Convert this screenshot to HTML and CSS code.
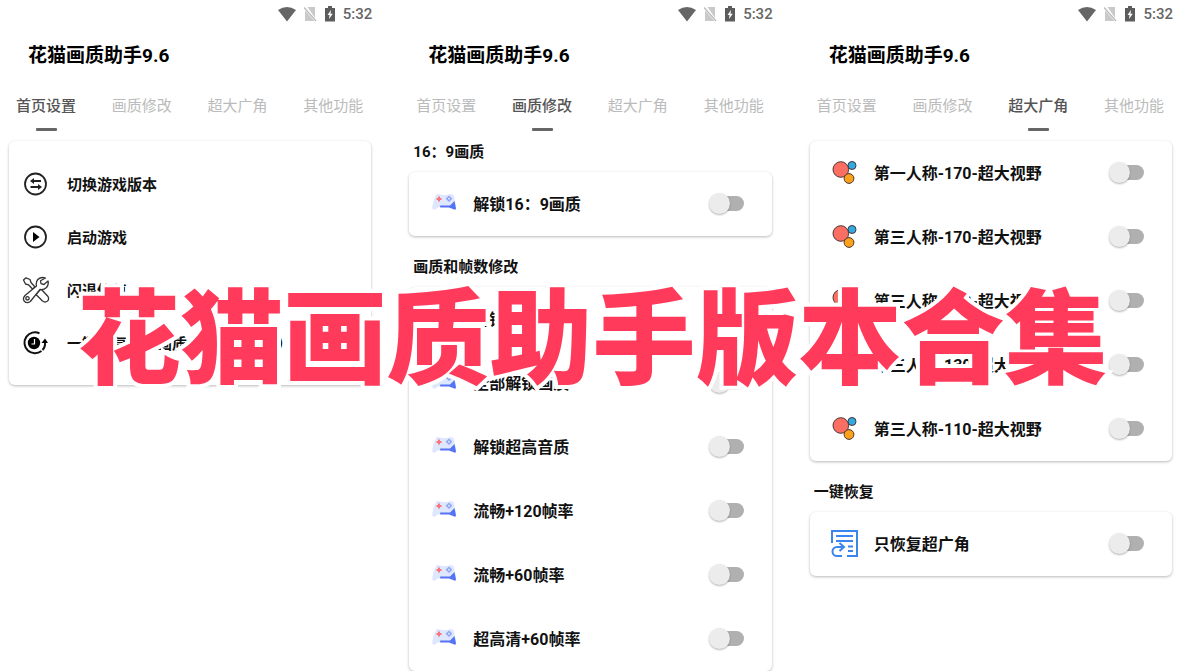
FILE: index.html
```html
<!DOCTYPE html>
<html lang="zh-CN">
<head>
  <meta charset="UTF-8">
  <title>花猫画质助手版本合集</title>
  <link rel="stylesheet" href="styles.css">
</head>
<body>
  <!-- Shared icons -->
  <svg class="sprite" aria-hidden="true">
    <symbol id="wifi" viewBox="0 0 20 16"><path d="M1 4Q10-2 19 4L10 15.500z" fill="#666"/></symbol>
    <symbol id="nosim" viewBox="0 0 14 16"><path d="M4.500 1H12v11zM2 4.500 11.500 15H2z" fill="#c9c9c9"/><path d="M1 1.500 13 15" stroke="#bbb" stroke-width="1.300"/></symbol>
    <symbol id="battery" viewBox="0 0 12 16"><path d="M4 0h4v2h3v13.500H1V2h3z" fill="#5c5c5c"/><path d="M7 4 3.500 9h2L5 13l3.800-5.300H6.500z" fill="#fff"/></symbol>
    <symbol id="gamepad" viewBox="0 0 28 28">
      <path d="M6 6Q7 4.500 9 5L12 6h5l3-1q3-.5 4 2l2 11q0 3-2.500 2L19 18H9l-4 2.500Q2 21.500 2.200 18 3 12 6 6z" fill="#dfe7ff"/>
      <path d="M24.500 12 26 19.500q0 2-3 .5L19 18.500H10.500q-1.500-1 0-2H20z" fill="#5573f5"/>
      <path d="M9 7.500v5M6.500 10h5" stroke="#f5777b" stroke-width="2"/>
      <path d="m19 6.500 3.300 3.300L19 13l-3.300-3.200z" fill="#8da5f3"/><path d="m19 8.500 1.200 1.300L19 11l-1.200-1.200z" fill="#dfe7ff"/>
    </symbol>
    <symbol id="balls" viewBox="0 0 28 28">
      <g stroke="#4b3436" stroke-width="1"><circle cx="9.800" cy="11.500" r="7.800" fill="#fb6f62"/><circle cx="21" cy="7.500" r="4" fill="#2eabe2"/><circle cx="18" cy="20.500" r="4.900" fill="#f9a11b"/></g>
    </symbol>
  </svg>

  <main class="screens">
    <section class="screen">
      <div class="status">
        <svg width="20" height="16"><use href="#wifi"/></svg>
        <svg width="14" height="16"><use href="#nosim"/></svg>
        <svg width="12" height="16"><use href="#battery"/></svg>
        <span>5:32</span>
      </div>
      <h2 class="title">花猫画质助手9.6</h2>
      <nav class="tabs">
        <a href="#" class="active">首页设置</a>
        <a href="#">画质修改</a>
        <a href="#">超大广角</a>
        <a href="#">其他功能</a>
      </nav>
      <div class="card menu">
        <button type="button" class="row">
          <svg class="icon" viewBox="0 0 28 28" fill="none" stroke="#222" stroke-width="1.800"><circle cx="13.500" cy="14" r="10.500"/><path d="M19 11H10M8.500 17H18"/><path d="M8 11l4-3v6zM20 17l-4-3v6z" fill="#222" stroke="none"/></svg>
          <span>切换游戏版本</span>
        </button>
        <button type="button" class="row">
          <svg class="icon" viewBox="0 0 28 28"><circle cx="13.500" cy="14" r="10.500" fill="none" stroke="#222" stroke-width="1.800"/><path d="M11 9v10l6.500-5z"/></svg>
          <span>启动游戏</span>
        </button>
        <button type="button" class="row">
          <svg class="icon" viewBox="0 0 28 28" fill="none" stroke="#333" stroke-width="1.300" stroke-linejoin="round"><path d="M1.500 4 4 1.800 8 3.500 9 6.500 13 11 10.500 13 6.500 8.800 3.500 8z"/><path d="M16 16l3-3 7 7.500q1.500 3-.8 4.800-2.200 1.500-4.700-.3L14 18.500z"/><path d="M23.500 2Q19 .5 15.800 3.500 13.500 6.500 14.500 10L3 19.500Q.3 22.500 2.300 25.200 5 27.800 8.300 25.500L18 13.500q4 .5 6.500-2Q27 8.500 26 5l-4 3.500-3-.8-.5-3z" fill="#fff"/><circle cx="5.500" cy="22.300" r="1.700"/></svg>
          <span>闪退修复</span>
        </button>
        <button type="button" class="row">
          <svg class="icon" viewBox="0 0 28 28"><path d="M17.500 4.300A10.500 10.500 0 1 0 19.500 22M23 13Q23.500 18 20.500 21" fill="none" stroke="#111" stroke-width="2"/><path d="M19.500 14 23 9.500 26 14z"/><circle cx="12" cy="14" r="6.200"/><path d="M12.500 10V15h-3" fill="none" stroke="#fff" stroke-width="1.200"/></svg>
          <span>一键恢复默认画质（包括超广角）</span>
        </button>
      </div>
    </section>

    <section class="screen">
      <div class="status">
        <svg width="20" height="16"><use href="#wifi"/></svg>
        <svg width="14" height="16"><use href="#nosim"/></svg>
        <svg width="12" height="16"><use href="#battery"/></svg>
        <span>5:32</span>
      </div>
      <h2 class="title">花猫画质助手9.6</h2>
      <nav class="tabs">
        <a href="#">首页设置</a>
        <a href="#" class="active">画质修改</a>
        <a href="#">超大广角</a>
        <a href="#">其他功能</a>
      </nav>
      <h3 class="group">16：9画质</h3>
      <div class="card">
        <label class="row"><svg class="icon"><use href="#gamepad"/></svg><span>解锁16：9画质</span><input type="checkbox" class="switch"></label>
      </div>
      <h3 class="group">画质和帧数修改</h3>
      <div class="card">
        <label class="row"><svg class="icon"><use href="#gamepad"/></svg><span>解锁画质</span><input type="checkbox" class="switch"></label>
        <label class="row"><svg class="icon"><use href="#gamepad"/></svg><span>全部解锁画质</span><input type="checkbox" class="switch"></label>
        <label class="row"><svg class="icon"><use href="#gamepad"/></svg><span>解锁超高音质</span><input type="checkbox" class="switch"></label>
        <label class="row"><svg class="icon"><use href="#gamepad"/></svg><span>流畅+120帧率</span><input type="checkbox" class="switch"></label>
        <label class="row"><svg class="icon"><use href="#gamepad"/></svg><span>流畅+60帧率</span><input type="checkbox" class="switch"></label>
        <label class="row"><svg class="icon"><use href="#gamepad"/></svg><span>超高清+60帧率</span><input type="checkbox" class="switch"></label>
      </div>
    </section>

    <section class="screen">
      <div class="status">
        <svg width="20" height="16"><use href="#wifi"/></svg>
        <svg width="14" height="16"><use href="#nosim"/></svg>
        <svg width="12" height="16"><use href="#battery"/></svg>
        <span>5:32</span>
      </div>
      <h2 class="title">花猫画质助手9.6</h2>
      <nav class="tabs">
        <a href="#">首页设置</a>
        <a href="#">画质修改</a>
        <a href="#" class="active">超大广角</a>
        <a href="#">其他功能</a>
      </nav>
      <div class="card">
        <label class="row"><svg class="icon"><use href="#balls"/></svg><span>第一人称-170-超大视野</span><input type="checkbox" class="switch"></label>
        <label class="row"><svg class="icon"><use href="#balls"/></svg><span>第三人称-170-超大视野</span><input type="checkbox" class="switch"></label>
        <label class="row"><svg class="icon"><use href="#balls"/></svg><span>第三人称-150-超大视野</span><input type="checkbox" class="switch"></label>
        <label class="row"><svg class="icon"><use href="#balls"/></svg><span>第三人称-130-超大视野</span><input type="checkbox" class="switch"></label>
        <label class="row"><svg class="icon"><use href="#balls"/></svg><span>第三人称-110-超大视野</span><input type="checkbox" class="switch"></label>
      </div>
      <h3 class="group">一键恢复</h3>
      <div class="card">
        <label class="row">
          <svg class="icon" viewBox="0 0 28 28" fill="none" stroke="#3b86ee" stroke-width="2"><path d="M1 14V2h25v25H16M5 7h17M5 12h17M17 17.500h5M17 22h5"/><path d="M11 27H6a4.500 4.500 0 0 1 0-9h6"/><path d="M8.500 14 13 18l-4.500 4"/></svg>
          <span>只恢复超广角</span><input type="checkbox" class="switch">
        </label>
      </div>
    </section>
  </main>

  <h1 class="banner">花猫画质助手版本合集</h1>
</body>
</html>
```
FILE: styles.css
```css
* {
  box-sizing: border-box;
}
body {
  margin: 0;
  background: #fff;
  color: #111;
  font-family: Roboto, "Noto Sans CJK SC", sans-serif;
  position: relative;
}
.sprite {
  display: none;
}
.screens {
  display: grid;
  grid-template-columns: repeat(3, 1fr);
  gap: 16px;
}

/* Phone header */
.status {
  display: flex;
  align-items: center;
  justify-content: flex-end;
  gap: 7px;
  height: 28px;
  padding-right: 12px;
  color: #666;
  font-size: 15px;
  font-weight: 500;
}
.status svg:first-child {
  margin-right: -1px;
}
.title {
  margin: 0;
  padding-left: 28px;
  color: #000;
  font-size: 19px;
  font-weight: 700;
  line-height: 55px;
}
.tabs {
  display: flex;
  justify-content: space-between;
  height: 49px;
  padding: 12px 21px 0 16px;
}
.tabs a {
  display: flex;
  flex-direction: column;
  align-items: center;
  gap: 11px;
  color: #bbb;
  font-size: 15px;
  line-height: 22px;
  text-decoration: none;
}
.tabs .active {
  color: #555;
  font-weight: 500;
}
.tabs .active::after {
  content: "";
  width: 21px;
  height: 3px;
  border-radius: 1px;
  background: #666;
}

/* Cards */
.card {
  margin: 0 13px 0 9px;
  border-radius: 6px;
  background: #fff;
  box-shadow: 0 1px 3px rgba(0, 0, 0, 0.28);
}
.tabs + .card {
  margin-top: 9px;
}
.group {
  margin: 0;
  padding-left: 13px;
  font-size: 15px;
  font-weight: 700;
  line-height: 40px;
}
.card + .group {
  margin-top: 11px;
}
.row {
  display: flex;
  align-items: center;
  gap: 15px;
  height: 64px;
  padding: 0 28px 2px 21px;
  font-size: 16px;
  font-weight: 700;
}
.row span {
  flex: 1;
  white-space: nowrap;
}
.icon {
  flex: none;
  width: 28px;
  height: 28px;
}
.menu {
  padding: 16px 0;
}
.menu .row {
  width: 100%;
  height: 53px;
  gap: 17px;
  padding: 0 13px;
  border: none;
  background: none;
  color: inherit;
  font-family: inherit;
  font-size: 15px;
  text-align: left;
}
.switch {
  appearance: none;
  position: relative;
  width: 30px;
  height: 15px;
  margin: 0;
  border-radius: 8px;
  background: #b0b0b0;
}
.switch::before {
  content: "";
  position: absolute;
  top: -3px;
  left: -5px;
  width: 21px;
  height: 21px;
  border-radius: 50%;
  background: #ececec;
  box-shadow: 0 1px 2px rgba(0, 0, 0, 0.3);
}

/* Headline laid over the screens */
.banner {
  position: absolute;
  top: 281px;
  left: 0;
  right: 0;
  margin: 0;
  color: #ff3a5b;
  font-size: 103px;
  font-weight: 900;
  line-height: 120px;
  text-align: center;
  white-space: nowrap;
  -webkit-text-stroke: 8px #fff;
  paint-order: stroke fill;
  pointer-events: none;
}
```
